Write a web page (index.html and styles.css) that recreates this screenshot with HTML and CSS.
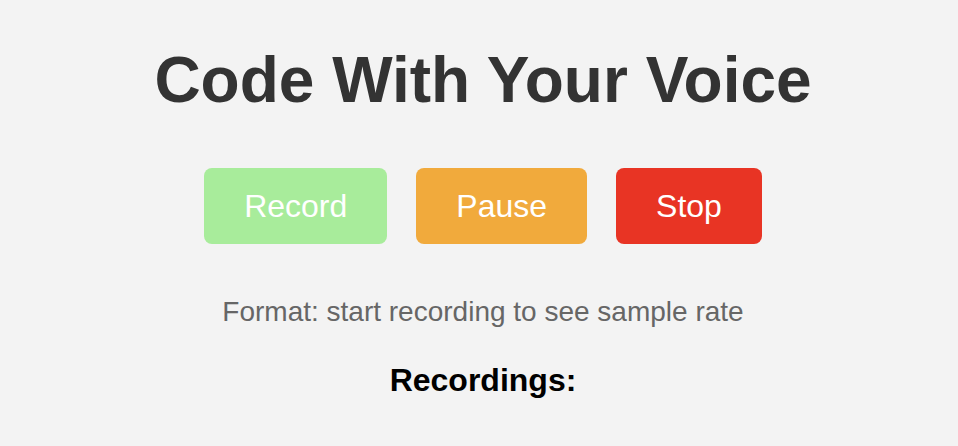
FILE: index.html
```html
<!DOCTYPE html>
<html lang="en">
<head>
<meta charset="utf-8">
<title>Code With Your Voice</title>
<link rel="stylesheet" href="styles.css">
</head>
<body>
  <main class="app">
    <h1 class="title">Code With Your Voice</h1>
    <div class="controls">
      <button class="btn btn-record" type="button">Record</button>
      <button class="btn btn-pause" type="button">Pause</button>
      <button class="btn btn-stop" type="button">Stop</button>
    </div>
    <p class="format">Format: start recording to see sample rate</p>
    <h2 class="recordings">Recordings:</h2>
  </main>
</body>
</html>
```
FILE: styles.css
```css
html, body {
  margin: 0;
  padding: 0;
  background: #f3f3f3;
}
body {
  font-family: "Liberation Sans", Arial, sans-serif;
}
.app {
  display: flex;
  flex-direction: column;
  align-items: center;
  padding: 43px 0 0 8px;
}
.title {
  margin: 0;
  font-size: 64px;
  font-weight: bold;
  line-height: 74px;
  color: #333333;
}
.controls {
  display: flex;
  gap: 29px;
  margin-top: 51px;
}
.btn {
  border: none;
  border-radius: 8px;
  padding: 0 40px;
  height: 76px;
  font-family: "Liberation Sans", Arial, sans-serif;
  font-size: 32px;
  color: #ffffff;
  cursor: pointer;
}
.btn-record { background: #a8ec9b; }
.btn-pause { background: #f1aa3c; }
.btn-stop { background: #e83424; }
.format {
  margin: 52px 0 0;
  font-size: 28px;
  line-height: 32px;
  color: #666666;
}
.recordings {
  margin: 34px 0 0;
  font-size: 32px;
  line-height: 37px;
  font-weight: bold;
  color: #000000;
}
```
